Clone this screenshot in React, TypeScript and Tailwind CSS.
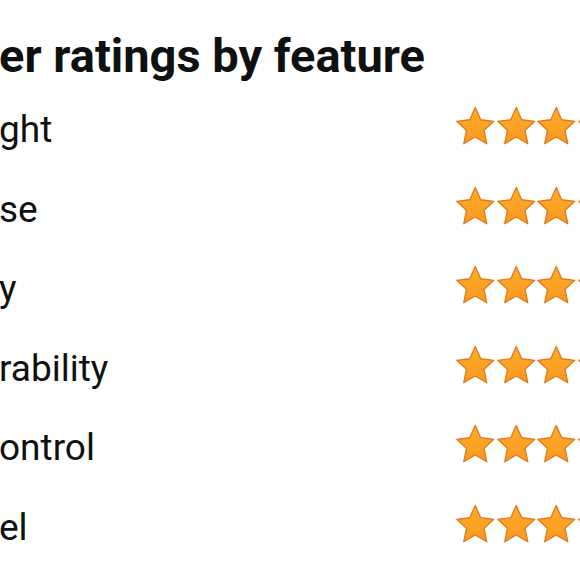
import React from "react";

const rows = ["ght", "se", "y", "rability", "ontrol", "el"];

function Star() {
  return (
    <svg width="40.5" height="42" viewBox="0 0 40 41.5" className="shrink-0">
      <defs>
        <linearGradient id="sg" x1="0" y1="0" x2="0" y2="1">
          <stop offset="0" stopColor="#FFAB2A" />
          <stop offset="1" stopColor="#F89A1E" />
        </linearGradient>
      </defs>
      <polygon
        points="20,2.5 25.4,14.6 38.3,16.1 28.7,25 31.4,38.3 20,31.6 8.6,38.3 11.3,25 1.7,16.1 14.6,14.6"
        fill="url(#sg)"
        stroke="#DE7A1E"
        strokeWidth="1.3"
        strokeLinejoin="round"
      />
    </svg>
  );
}

export default function App() {
  return (
    <div
      className="w-[580px] h-[580px] overflow-hidden bg-white text-[#0F1111]"
      style={{ fontFamily: "Roboto, 'Liberation Sans', sans-serif" }}
    >
      <div className="pt-[28px]">
        <h2 className="text-[47px] leading-[56px] font-bold whitespace-nowrap -ml-[1px]">
          er ratings by feature
        </h2>
        <div className="mt-[6px] flex flex-col">
          {rows.map((r) => (
            <div key={r} className="grid grid-cols-[455px_auto] h-[79.6px]">
              <div className="text-[37px] leading-[79.6px] whitespace-nowrap -ml-[1px]">{r}</div>
              <div className="flex pt-[15px]">
                <Star />
                <Star />
                <Star />
                <Star />
                <Star />
              </div>
            </div>
          ))}
        </div>
      </div>
    </div>
  );
}
